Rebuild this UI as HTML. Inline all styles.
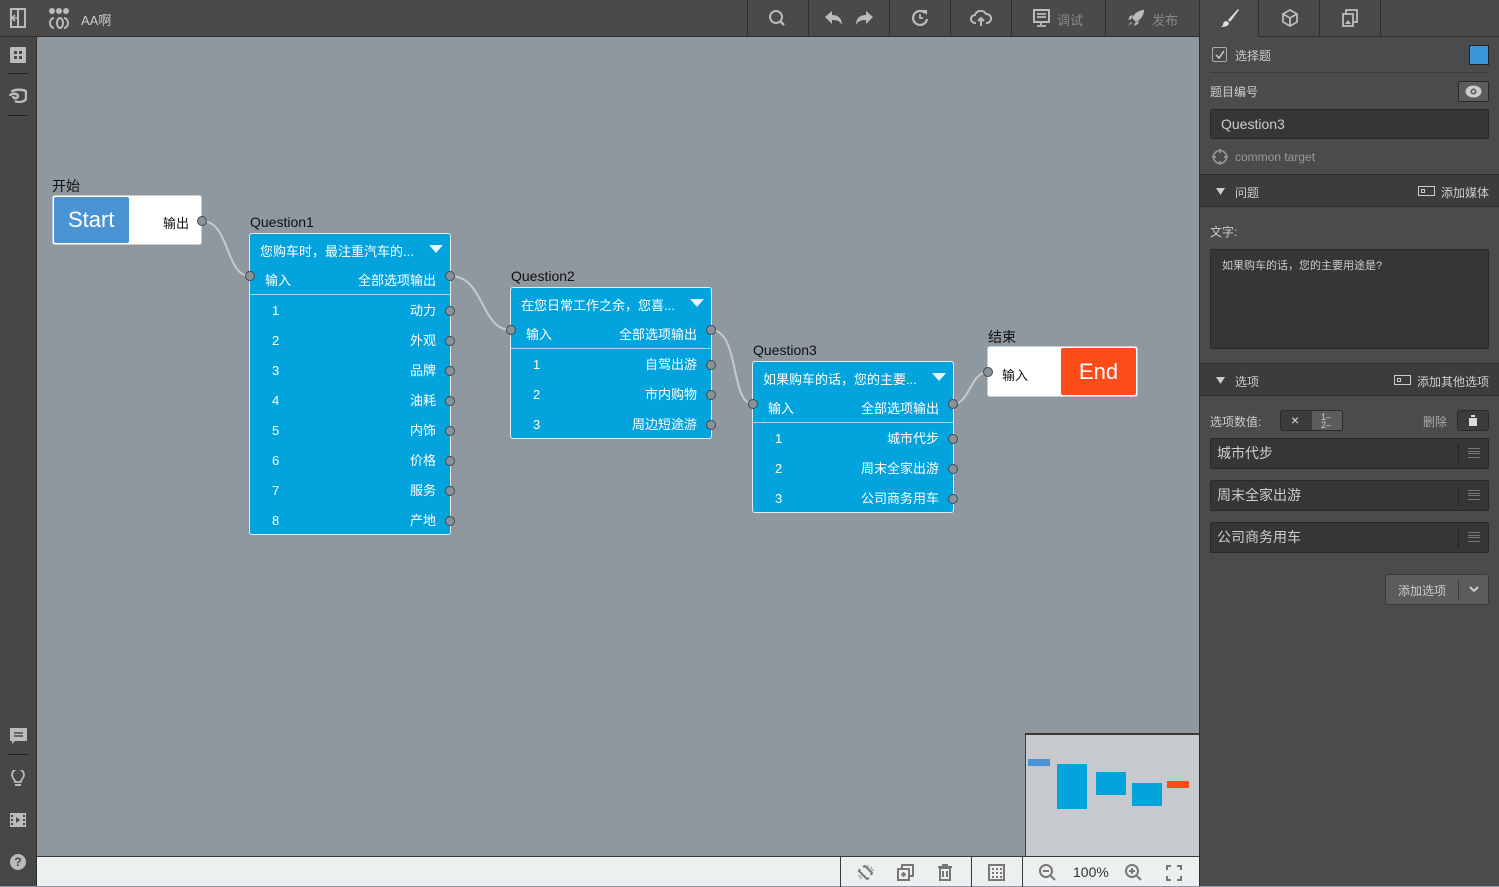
<!DOCTYPE html>
<html><head><meta charset="utf-8"><style>
*{box-sizing:border-box;margin:0;padding:0}
body{width:1499px;height:886px;overflow:hidden;position:relative;background:#8f979f;font-family:"Liberation Sans","Noto Sans CJK SC",sans-serif;font-size:13px}
.a{position:absolute}
#top{left:0;top:0;width:1499px;height:37px;background:#4a4a4a;border-bottom:1px solid #2e2e2e}
#left{left:0;top:37px;width:37px;height:849px;background:#474747;border-right:1px solid #2e2e2e}
#bot{left:37px;top:856px;width:1163px;height:30px;background:#ecf0f1;border-top:1px solid #3a3a3a}
#rp{left:1199px;top:37px;width:300px;height:849px;background:#4b4b4b;border-left:1px solid #2e2e2e}
.sep{position:absolute;top:0;width:1px;height:36px;background:#2e2e2e}
.tl{color:#bbb;font-size:13px}
.node{position:absolute;background:#03a4de;border:1px solid #e0eef5;border-radius:3px;color:#fff;font-size:13px}
.port{position:absolute;width:10px;height:10px;border-radius:50%;background:#8a9299;border:1.5px solid #3e4a55}
.lbl{position:absolute;color:#111;font-size:14px}
.row{position:absolute;left:0;width:100%;height:30px;line-height:30px}
.row .n{position:absolute;left:22px}
.row .t{position:absolute;right:14px}
.hdr{position:absolute;left:0;width:300px;height:33px;background:#3c3c3c;border-top:1px solid #2e2e2e;border-bottom:1px solid #2e2e2e;color:#ccc;font-size:12px}
.inp{position:absolute;left:10px;width:279px;height:31px;background:#363636;border:1px solid #2a2a2a;border-radius:2px;color:#ccc;font-size:14px;line-height:29px;padding-left:6px}
.inp .h{position:absolute;right:0;top:5px;height:20px;width:30px;border-left:1px solid #222}
.bi{position:absolute;top:0;height:30px;display:flex;align-items:center;justify-content:center}
</style></head><body>
<div id="top" class="a">
 <svg class="a" style="left:9px;top:8px" width="18" height="20" viewBox="0 0 18 20"><path d="M2 1h14v18H2z M9 1v18" fill="none" stroke="#bbb" stroke-width="2"/><path d="M4 10h5M6 7l-3 3 3 3" fill="none" stroke="#bbb" stroke-width="1.6"/></svg>
 <svg class="a" style="left:46px;top:7px" width="26" height="23" viewBox="0 0 26 23"><circle cx="6" cy="4" r="3" fill="#bbb"/><circle cx="13" cy="4" r="3" fill="#bbb"/><circle cx="20" cy="4" r="3" fill="#bbb"/><path d="M8 11a4 5 0 1 0 0 10M11 16a3 5 0 1 0 6 0a3 5 0 1 0 -6 0M18 11a4 5 0 1 1 0 10" fill="none" stroke="#bbb" stroke-width="2"/></svg>
 <div class="a tl" style="left:81px;top:10px;color:#ccc">AA啊</div>
 <div class="sep" style="left:747px"></div><div class="sep" style="left:808px"></div><div class="sep" style="left:889px"></div><div class="sep" style="left:950px"></div><div class="sep" style="left:1011px"></div><div class="sep" style="left:1105px"></div>
 <svg class="a" style="left:768px;top:9px" width="18" height="18" viewBox="0 0 18 18"><circle cx="8" cy="8" r="6" fill="none" stroke="#bbb" stroke-width="2"/><path d="M12 12l4 4" stroke="#bbb" stroke-width="2.4"/></svg>
 <svg class="a" style="left:824px;top:10px" width="50" height="16" viewBox="0 0 50 16"><path d="M1 7l7-6v4c6 0 10 3 10 10c-2-4-5-5-10-5v4z" fill="#bbb"/><path d="M49 7l-7-6v4c-6 0-10 3-10 10c2-4 5-5 10-5v4z" fill="#bbb"/></svg>
 <svg class="a" style="left:911px;top:9px" width="18" height="18" viewBox="0 0 18 18"><path d="M14 4a7 7 0 1 0 2 6" fill="none" stroke="#bbb" stroke-width="2.2"/><path d="M11 1h5v5z" fill="#bbb"/><path d="M9 5v4h3" fill="none" stroke="#bbb" stroke-width="1.8"/></svg>
 <svg class="a" style="left:970px;top:9px" width="22" height="18" viewBox="0 0 22 18"><path d="M6 14H5a4 4 0 0 1 0-8a6 6 0 0 1 11-1a4.5 4.5 0 0 1 1 9h-1" fill="none" stroke="#bbb" stroke-width="2"/><path d="M11 17V9M8 12l3-3 3 3" fill="none" stroke="#bbb" stroke-width="2"/></svg>
 <svg class="a" style="left:1033px;top:9px" width="17" height="18" viewBox="0 0 17 18"><rect x="1" y="1" width="15" height="12" fill="none" stroke="#bbb" stroke-width="2"/><path d="M4 5h9M4 8h9M8 13v3M4 17h9" stroke="#bbb" stroke-width="1.8"/></svg>
 <div class="a tl" style="left:1057px;top:10px;color:#888">调试</div>
 <svg class="a" style="left:1127px;top:9px" width="18" height="18" viewBox="0 0 18 18"><path d="M17 1c-6 0-10 4-12 8l4 4c4-2 8-6 8-12zM4 10l-3 1 2-4 3-1zM8 14l-1 3 4-2 1-3zM4 13l-3 4 4-3z" fill="#bbb"/></svg>
 <div class="a tl" style="left:1152px;top:10px;color:#888">发布</div>
 <div class="a" style="left:1199px;top:0;width:60px;height:37px;background:#4b4b4b;border-left:1px solid #2e2e2e;border-right:1px solid #2e2e2e"></div>
 <div class="sep" style="left:1319px"></div><div class="sep" style="left:1380px"></div>
 <svg class="a" style="left:1220px;top:8px" width="20" height="20" viewBox="0 0 20 20"><path d="M18 1L8 12l2 2L19 2z" fill="#ddd"/><path d="M7 13c-3 0-4 2-4 4l-2 2c4 0 8-1 8-4z" fill="#ddd"/></svg>
 <svg class="a" style="left:1282px;top:9px" width="16" height="18" viewBox="0 0 16 18"><path d="M8 1l7 4v8l-7 4-7-4V5zM1 5l7 4 7-4M8 9v8" fill="none" stroke="#bbb" stroke-width="1.8"/></svg>
 <svg class="a" style="left:1342px;top:9px" width="16" height="18" viewBox="0 0 16 18"><rect x="4" y="1" width="11" height="12" fill="none" stroke="#bbb" stroke-width="1.8"/><rect x="1" y="5" width="10" height="12" fill="#4a4a4a" stroke="#bbb" stroke-width="1.8"/><path d="M3 15l3-4 3 4z" fill="#bbb"/></svg>
</div>
<div id="left" class="a">
 <svg class="a" style="left:10px;top:10px" width="16" height="16"><rect width="16" height="16" rx="1" fill="#bbb"/><rect x="4" y="4" width="3" height="3" fill="#474747"/><rect x="9" y="4" width="3" height="3" fill="#474747"/><rect x="4" y="9" width="3" height="3" fill="#474747"/><rect x="9" y="9" width="3" height="3" fill="#474747"/></svg>
 <div class="a" style="left:8px;top:36px;width:20px;height:1px;background:#222"></div>
 <svg class="a" style="left:9px;top:51px" width="18" height="15" viewBox="0 0 18 15"><path d="M3 4c0-3 14-3 14 0v6c0 4-8 5-11 3M1 8c0-3 8-3 8 0s-5 3-5 0" fill="none" stroke="#bbb" stroke-width="2.4"/></svg>
 <div class="a" style="left:8px;top:78px;width:20px;height:1px;background:#222"></div>
 <svg class="a" style="left:10px;top:691px" width="17" height="17" viewBox="0 0 17 17"><path d="M0 0h17v13H5l-3 3v-3H0z" fill="#bbb"/><path d="M4 5h9M4 8h9" stroke="#474747" stroke-width="1.5"/></svg>
 <div class="a" style="left:8px;top:717px;width:20px;height:1px;background:#222"></div>
 <svg class="a" style="left:11px;top:733px" width="14" height="18" viewBox="0 0 14 18"><path d="M4 12c0-3-3-4-3-7a6 6 0 0 1 12 0c0 3-3 4-3 7z" fill="none" stroke="#bbb" stroke-width="1.8"/><path d="M4 15h6" stroke="#bbb" stroke-width="2"/></svg>
 <svg class="a" style="left:10px;top:776px" width="16" height="14"><rect width="16" height="14" fill="#bbb"/><path d="M6 4l4 3-4 3z" fill="#474747"/><rect x="1" y="2" width="2" height="2" fill="#474747"/><rect x="1" y="6" width="2" height="2" fill="#474747"/><rect x="1" y="10" width="2" height="2" fill="#474747"/><rect x="13" y="2" width="2" height="2" fill="#474747"/><rect x="13" y="6" width="2" height="2" fill="#474747"/><rect x="13" y="10" width="2" height="2" fill="#474747"/></svg>
 <div class="a" style="left:10px;top:817px;width:16px;height:16px;border-radius:50%;background:#bbb;color:#474747;font-weight:bold;font-size:12px;text-align:center;line-height:16px">?</div>
</div>

<svg class="a" style="left:0;top:0" width="1200" height="856"><g fill="none" stroke="#c9c9c9" stroke-width="2">
<path d="M202 221C230 221 225 276 250 276"/><path d="M450 276C485 276 480 330 511 330"/><path d="M711 330C740 330 730 404 753 404"/><path d="M953 404C970 404 970 372 988 372"/></g></svg>

<div class="lbl" style="left:52px;top:176px">开始</div>
<div class="a" style="left:52px;top:195px;width:150px;height:50px;background:#fff;border:1px solid #ccc;border-radius:3px"></div>
<div class="a" style="left:54px;top:197px;width:75px;height:46px;background:#4a94d4;border-radius:2px;color:#fff;font-size:22px;line-height:46px;padding-left:14px">Start</div>
<div class="a" style="left:163px;top:213px;font-size:13px;color:#111">输出</div>
<div class="port" style="left:197px;top:216px"></div>

<div class="lbl" style="left:250px;top:214px">Question1</div>
<div class="node" style="left:249px;top:233px;width:202px;height:302px">
 <div class="a" style="left:10px;top:7px">您购车时，最注重汽车的...</div>
 <svg class="a" style="left:179px;top:11px" width="14" height="8"><path d="M0 0h14L7 8z" fill="#e6f4fb"/></svg>
 <div class="a" style="left:15px;top:36px">输入</div><div class="a" style="right:14px;top:36px">全部选项输出</div>
 <div class="a" style="left:0;top:60px;width:100%;height:1px;background:#9ad8f0"></div>
 <div class="row" style="top:62px"><span class="n">1</span><span class="t">动力</span></div>
 <div class="row" style="top:92px"><span class="n">2</span><span class="t">外观</span></div>
 <div class="row" style="top:122px"><span class="n">3</span><span class="t">品牌</span></div>
 <div class="row" style="top:152px"><span class="n">4</span><span class="t">油耗</span></div>
 <div class="row" style="top:182px"><span class="n">5</span><span class="t">内饰</span></div>
 <div class="row" style="top:212px"><span class="n">6</span><span class="t">价格</span></div>
 <div class="row" style="top:242px"><span class="n">7</span><span class="t">服务</span></div>
 <div class="row" style="top:272px"><span class="n">8</span><span class="t">产地</span></div>
</div>
<div class="port" style="left:245px;top:271px"></div><div class="port" style="left:445px;top:271px"></div>
<div class="port" style="left:445px;top:306px"></div><div class="port" style="left:445px;top:336px"></div><div class="port" style="left:445px;top:366px"></div><div class="port" style="left:445px;top:396px"></div><div class="port" style="left:445px;top:426px"></div><div class="port" style="left:445px;top:456px"></div><div class="port" style="left:445px;top:486px"></div><div class="port" style="left:445px;top:516px"></div>

<div class="lbl" style="left:511px;top:268px">Question2</div>
<div class="node" style="left:510px;top:287px;width:202px;height:152px">
 <div class="a" style="left:10px;top:7px">在您日常工作之余，您喜...</div>
 <svg class="a" style="left:179px;top:11px" width="14" height="8"><path d="M0 0h14L7 8z" fill="#e6f4fb"/></svg>
 <div class="a" style="left:15px;top:36px">输入</div><div class="a" style="right:14px;top:36px">全部选项输出</div>
 <div class="a" style="left:0;top:60px;width:100%;height:1px;background:#9ad8f0"></div>
 <div class="row" style="top:62px"><span class="n">1</span><span class="t">自驾出游</span></div>
 <div class="row" style="top:92px"><span class="n">2</span><span class="t">市内购物</span></div>
 <div class="row" style="top:122px"><span class="n">3</span><span class="t">周边短途游</span></div>
</div>
<div class="port" style="left:506px;top:325px"></div><div class="port" style="left:706px;top:325px"></div>
<div class="port" style="left:706px;top:360px"></div><div class="port" style="left:706px;top:390px"></div><div class="port" style="left:706px;top:420px"></div>

<div class="lbl" style="left:753px;top:342px">Question3</div>
<div class="node" style="left:752px;top:361px;width:202px;height:152px">
 <div class="a" style="left:10px;top:7px">如果购车的话，您的主要...</div>
 <svg class="a" style="left:179px;top:11px" width="14" height="8"><path d="M0 0h14L7 8z" fill="#e6f4fb"/></svg>
 <div class="a" style="left:15px;top:36px">输入</div><div class="a" style="right:14px;top:36px">全部选项输出</div>
 <div class="a" style="left:0;top:60px;width:100%;height:1px;background:#9ad8f0"></div>
 <div class="row" style="top:62px"><span class="n">1</span><span class="t">城市代步</span></div>
 <div class="row" style="top:92px"><span class="n">2</span><span class="t">周末全家出游</span></div>
 <div class="row" style="top:122px"><span class="n">3</span><span class="t">公司商务用车</span></div>
</div>
<div class="port" style="left:748px;top:399px"></div><div class="port" style="left:948px;top:399px"></div>
<div class="port" style="left:948px;top:434px"></div><div class="port" style="left:948px;top:464px"></div><div class="port" style="left:948px;top:494px"></div>

<div class="lbl" style="left:988px;top:327px">结束</div>
<div class="a" style="left:987px;top:346px;width:151px;height:51px;background:#fff;border:1px solid #ccc;border-radius:3px"></div>
<div class="a" style="left:1061px;top:348px;width:75px;height:47px;background:#fe4b1a;border-radius:2px;color:#fff;font-size:22px;line-height:47px;text-align:center">End</div>
<div class="a" style="left:1002px;top:365px;color:#111">输入</div>
<div class="port" style="left:983px;top:367px"></div>

<div class="a" style="left:1025px;top:733px;width:175px;height:124px;background:#c6c9cd;border:1px solid #3a3a3a;border-top-width:2px">
 <div class="a" style="left:2px;top:24px;width:22px;height:7px;background:#4a94d4"></div>
 <div class="a" style="left:31px;top:29px;width:30px;height:45px;background:#03a4de"></div>
 <div class="a" style="left:70px;top:37px;width:30px;height:23px;background:#03a4de"></div>
 <div class="a" style="left:106px;top:48px;width:30px;height:23px;background:#03a4de"></div>
 <div class="a" style="left:141px;top:46px;width:22px;height:7px;background:#fe4b1a"></div>
</div>

<div id="bot" class="a">
 <div class="a" style="left:803px;top:0;width:1px;height:30px;background:#3a3a3a"></div>
 <div class="a" style="left:934px;top:0;width:1px;height:30px;background:#3a3a3a"></div>
 <div class="a" style="left:985px;top:0;width:1px;height:30px;background:#3a3a3a"></div>
 <svg class="a" style="left:820px;top:7px" width="18" height="17" viewBox="0 0 18 17"><path d="M3 5l-1 2 8 8 2-1M14 11l1-2-7-7-2 1" fill="none" stroke="#777" stroke-width="2"/><path d="M11 1v3M15 3l-2 2M17 6h-3M1 12h3M3 15l2-2" stroke="#999" stroke-width="1.2"/></svg>
 <svg class="a" style="left:860px;top:7px" width="17" height="17" viewBox="0 0 17 17"><rect x="5" y="1" width="11" height="11" fill="none" stroke="#777" stroke-width="2"/><rect x="1" y="5" width="11" height="11" fill="#ecf0f1" stroke="#777" stroke-width="2"/><path d="M6.5 8v5M4 10.5h5" stroke="#777" stroke-width="2"/></svg>
 <svg class="a" style="left:901px;top:7px" width="14" height="17" viewBox="0 0 14 17"><path d="M0 3h14M5 3V1h4v2M2 4h10v12H2z M5 7v6M9 7v6" fill="none" stroke="#777" stroke-width="2"/></svg>
 <svg class="a" style="left:951px;top:7px" width="17" height="17"><rect x="1" y="1" width="15" height="15" fill="none" stroke="#777" stroke-width="2"/><g fill="#777"><rect x="4" y="4" width="2" height="2"/><rect x="8" y="4" width="2" height="2"/><rect x="12" y="4" width="2" height="2"/><rect x="4" y="8" width="2" height="2"/><rect x="8" y="8" width="2" height="2"/><rect x="12" y="8" width="2" height="2"/><rect x="4" y="12" width="2" height="2"/><rect x="8" y="12" width="2" height="2"/><rect x="12" y="12" width="2" height="2"/></g></svg>
 <svg class="a" style="left:1002px;top:7px" width="17" height="17"><circle cx="7" cy="7" r="6" fill="none" stroke="#777" stroke-width="2"/><path d="M4 7h6M11 11l5 5" stroke="#777" stroke-width="2"/></svg>
 <div class="a" style="left:1036px;top:7px;font-size:14px;color:#333">100%</div>
 <svg class="a" style="left:1088px;top:7px" width="17" height="17"><circle cx="7" cy="7" r="6" fill="none" stroke="#777" stroke-width="2"/><path d="M4 7h6M7 4v6M11 11l5 5" stroke="#777" stroke-width="2"/></svg>
 <svg class="a" style="left:1129px;top:8px" width="16" height="16"><path d="M1 5V1h4M11 1h4v4M15 11v4h-4M5 15H1v-4" fill="none" stroke="#777" stroke-width="2"/></svg>
</div>

<div id="rp" class="a">
 <div class="a" style="left:12px;top:10px;width:15px;height:15px;border:1px solid #aaa;border-radius:2px"></div>
 <svg class="a" style="left:14px;top:12px" width="11" height="11"><path d="M2 6l3 3 5-7" fill="none" stroke="#ccc" stroke-width="1.5"/></svg>
 <div class="a" style="left:35px;top:10px;color:#ccc;font-size:12px">选择题</div>
 <div class="a" style="left:269px;top:8px;width:20px;height:20px;background:#3a97dd;border:1px solid #222"></div>
 <div class="a" style="left:10px;top:35px;width:279px;height:1px;background:#3a3a3a"></div>
 <div class="a" style="left:10px;top:46px;color:#ccc;font-size:12px">题目编号</div>
 <div class="a" style="left:258px;top:44px;width:31px;height:21px;background:#5c5c5c;border:1px solid #2a2a2a;border-radius:2px"></div>
 <svg class="a" style="left:265px;top:48px" width="17" height="13"><ellipse cx="8.5" cy="6.5" rx="8" ry="6" fill="#ccc"/><circle cx="8.5" cy="6.5" r="3" fill="#5c5c5c"/><circle cx="8.5" cy="6.5" r="1.4" fill="#ccc"/></svg>
 <div class="inp" style="top:72px;height:30px;padding-left:10px;border-color:#2a2a2a">Question3</div>
 <svg class="a" style="left:12px;top:112px" width="16" height="16"><circle cx="8" cy="8" r="6.5" fill="none" stroke="#999" stroke-width="1.6"/><path d="M8 0v4M8 12v4M0 8h4M12 8h4" stroke="#999" stroke-width="1.6"/></svg>
 <div class="a" style="left:35px;top:113px;color:#999;font-size:12px">common target</div>
 <div class="hdr" style="top:137px">
  <svg class="a" style="left:16px;top:13px" width="9" height="7"><path d="M0 0h9L4.5 7z" fill="#ccc"/></svg>
  <div class="a" style="left:35px;top:9px">问题</div>
  <div class="a" style="left:218px;top:11px;width:17px;height:10px;border:1px solid #ccc"><div class="a" style="left:2px;top:2px;width:4px;height:4px;border:1px solid #ccc"></div></div>
  <div class="a" style="left:241px;top:9px">添加媒体</div>
 </div>
 <div class="a" style="left:10px;top:186px;color:#ccc;font-size:12px">文字:</div>
 <div class="a" style="left:10px;top:212px;width:279px;height:100px;background:#363636;border:1px solid #2a2a2a;border-radius:2px;color:#ccc;font-size:11px;padding:7px 11px">如果购车的话，您的主要用途是?</div>
 <div class="hdr" style="top:326px">
  <svg class="a" style="left:16px;top:13px" width="9" height="7"><path d="M0 0h9L4.5 7z" fill="#ccc"/></svg>
  <div class="a" style="left:35px;top:9px">选项</div>
  <div class="a" style="left:194px;top:11px;width:17px;height:10px;border:1px solid #ccc"><div class="a" style="left:2px;top:2px;width:4px;height:4px;border:1px solid #ccc"></div></div>
  <div class="a" style="left:217px;top:9px">添加其他选项</div>
 </div>
 <div class="a" style="left:10px;top:376px;color:#ccc;font-size:12px">选项数值:</div>
 <div class="a" style="left:80px;top:373px;width:63px;height:21px;border:1px solid #2a2a2a;border-radius:3px;background:#3c3c3c;overflow:hidden">
  <div class="a" style="left:31px;top:0;width:31px;height:21px;background:#5c5c5c"></div>
  <div class="a" style="left:10px;top:1px;color:#ddd;font-size:14px">×</div>
  <div class="a" style="left:40px;top:2px;color:#ccc;font-size:9px;line-height:8px">1–<br>2–</div>
 </div>
 <div class="a" style="left:223px;top:376px;color:#aaa;font-size:12px">删除</div>
 <div class="a" style="left:257px;top:373px;width:32px;height:21px;background:#3c3c3c;border:1px solid #2a2a2a;border-radius:3px"></div>
 <svg class="a" style="left:268px;top:378px" width="10" height="11"><path d="M0 2h10M3 2V0h4v2M1 3h8v8H1z" fill="#ddd"/></svg>
 <div class="inp" style="top:401px">城市代步<div class="h"></div><div class="a" style="right:8px;top:9px;width:12px;height:10px;border-top:1px solid #777;border-bottom:1px solid #777"><div style="border-top:1px solid #777;margin-top:2px;height:3px;border-bottom:1px solid #777"></div></div></div>
 <div class="inp" style="top:443px">周末全家出游<div class="h"></div><div class="a" style="right:8px;top:9px;width:12px;height:10px;border-top:1px solid #777;border-bottom:1px solid #777"><div style="border-top:1px solid #777;margin-top:2px;height:3px;border-bottom:1px solid #777"></div></div></div>
 <div class="inp" style="top:485px">公司商务用车<div class="h"></div><div class="a" style="right:8px;top:9px;width:12px;height:10px;border-top:1px solid #777;border-bottom:1px solid #777"><div style="border-top:1px solid #777;margin-top:2px;height:3px;border-bottom:1px solid #777"></div></div></div>
 <div class="a" style="left:185px;top:537px;width:104px;height:31px;background:#5c5c5c;border:1px solid #3a3a3a;border-radius:3px">
  <div class="a" style="left:12px;top:7px;color:#ccc;font-size:12px">添加选项</div>
  <div class="a" style="left:72px;top:5px;width:1px;height:20px;background:#3a3a3a"></div>
  <svg class="a" style="left:83px;top:11px" width="10" height="7"><path d="M1 1l4 4 4-4" fill="none" stroke="#ccc" stroke-width="2"/></svg>
 </div>
</div>
</body></html>
